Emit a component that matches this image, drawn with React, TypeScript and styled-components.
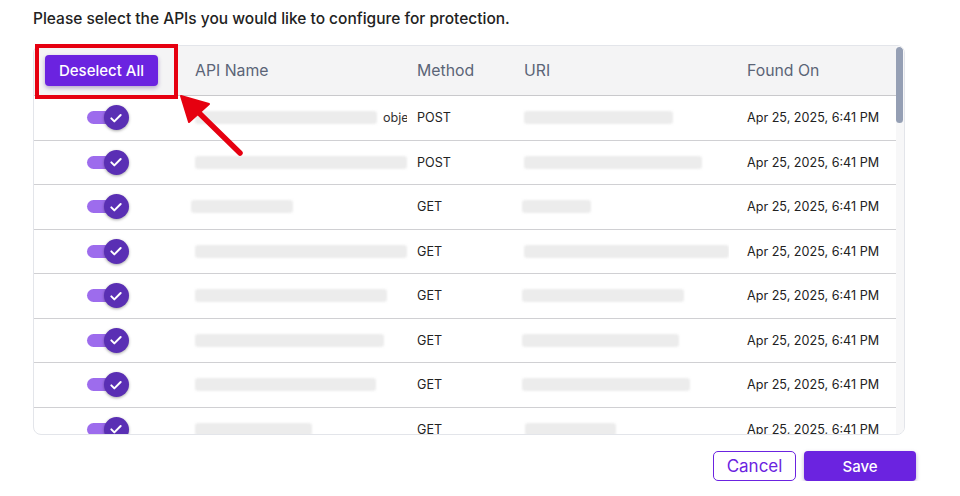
import * as React from 'react'
import styled, { createGlobalStyle } from 'styled-components'

const GlobalStyle = createGlobalStyle`
  html, body {
    margin: 0;
    padding: 0;
    background: #fff;
    font-family: Inter, "Noto Sans", sans-serif;
  }
`

const Page = styled.div`
  position: relative;
  width: 883px;
  padding: 9px 0 0 33px;
`

const Title = styled.div`
  font-size: 15.5px;
  font-weight: 500;
  color: #222;
  line-height: 20px;
  margin-bottom: 16px;
`

const TableCard = styled.div`
  position: relative;
  width: 872px;
  height: 390px;
  border: 1px solid #e3e5ea;
  border-radius: 8px;
  box-sizing: border-box;
  overflow: hidden;
`

const Scroller = styled.div`
  height: 100%;
  margin-right: 8px;
  overflow-y: scroll;
  scrollbar-width: none;

  &::-webkit-scrollbar {
    display: none;
  }
`

const ScrollTrack = styled.div`
  position: absolute;
  top: 0;
  right: 0;
  bottom: 0;
  width: 8px;
  background: #f7f7f8;
`

const ScrollThumb = styled.div`
  margin-top: 1px;
  width: 7px;
  height: 76px;
  border-radius: 4px;
  background: #959fb4;
`

const Grid = styled.div`
  display: grid;
  grid-template-columns: 143px 222px 107px 223px 1fr;
`

const HeadCell = styled.div`
  height: 50px;
  display: flex;
  align-items: center;
  padding-left: 18px;
  background: #f4f4f5;
  border-bottom: 1px solid #c9c9cc;
  color: #5b6477;
  font-size: 15.8px;
  box-sizing: border-box;
  position: sticky;
  top: 0;
  z-index: 1;
`

const CheckHead = styled(HeadCell)`
  padding-left: 11px;
`

const Cell = styled.div`
  height: 44.5px;
  display: flex;
  align-items: center;
  padding-left: 18px;
  border-bottom: 1px solid #d0d0d3;
  box-sizing: border-box;
  color: #222;
  font-size: 12.6px;
  white-space: nowrap;
  overflow: hidden;
`

const NameCell = styled(Cell)`
  overflow: visible;
`

const ToggleCell = styled(Cell)`
  justify-content: center;
  padding-left: 0;
`

const DeselectButton = styled.button`
  width: 113px;
  height: 31px;
  border: none;
  border-radius: 4px;
  background: #6b23e0;
  color: #fff;
  font-family: inherit;
  font-size: 15px;
  font-weight: 500;
  box-shadow: 0 2px 4px rgba(60, 20, 120, 0.35);
  cursor: pointer;
`

const Track = styled.div`
  position: relative;
  width: 30px;
  height: 13px;
  border-radius: 7px;
  background: #9d6ced;
  margin-right: 8px;
`

const Thumb = styled.div`
  position: absolute;
  right: -12px;
  top: -6px;
  width: 25px;
  height: 25px;
  border-radius: 50%;
  background: #5a2fb4;
  box-shadow: 0 1px 3px rgba(0, 0, 0, 0.35);
  display: flex;
  align-items: center;
  justify-content: center;
`

const Blur = styled.span<{ $w: number; $shift?: number }>`
  display: inline-block;
  flex-shrink: 0;
  width: ${p => p.$w}px;
  height: 13px;
  margin-left: ${p => p.$shift || 0}px;
  background: #ececec;
  border-radius: 3px;
  filter: blur(1.2px);
`

const Frag = styled.span`
  flex-shrink: 0;
  margin-left: 6px;
  max-width: 24px;
  overflow: hidden;
  color: #333;
`

const Footer = styled.div`
  display: flex;
  justify-content: flex-end;
  gap: 8px;
  margin-top: 16px;
`

const CancelButton = styled.button`
  width: 83px;
  height: 30px;
  background: #fff;
  border: 1.5px solid #6b23e0;
  border-radius: 5px;
  color: #6b23e0;
  font-family: inherit;
  font-size: 17px;
  cursor: pointer;
`

const SaveButton = styled.button`
  width: 112px;
  height: 30px;
  background: #6b23e0;
  border: none;
  border-radius: 4px;
  color: #fff;
  font-family: inherit;
  font-size: 15px;
  font-weight: 500;
  box-shadow: 0 2px 4px rgba(60, 20, 120, 0.35);
  cursor: pointer;
`

const Highlight = styled.div`
  position: absolute;
  left: 35px;
  top: 44px;
  width: 143px;
  height: 55px;
  border: 4px solid #e60010;
  box-sizing: border-box;
  pointer-events: none;
  z-index: 3;
`

const Arrow = styled.svg`
  position: absolute;
  left: 0;
  top: 0;
  pointer-events: none;
  z-index: 3;
`

type Row = {
  api: number
  apiShift?: number
  frag?: string
  method: string
  uri: number
  uriShift?: number
}

const rows: Row[] = [
  { api: 182, frag: 'obje', method: 'POST', uri: 149 },
  { api: 212, method: 'POST', uri: 178 },
  { api: 102, apiShift: -4, method: 'GET', uri: 69, uriShift: -2 },
  { api: 212, method: 'GET', uri: 205 },
  { api: 192, method: 'GET', uri: 162, uriShift: -2 },
  { api: 189, method: 'GET', uri: 157, uriShift: -2 },
  { api: 181, method: 'GET', uri: 168, uriShift: -2 },
  { api: 117, method: 'GET', uri: 91, uriShift: 1 },
]

// pad the list so the table scrolls like the real one
const allRows: Row[] = Array.from({ length: 44 }, (_, i) => rows[i % rows.length])

const Check = () => (
  <svg width="16" height="16" viewBox="0 0 24 24" fill="none" stroke="#fff" strokeWidth="3" strokeLinecap="round" strokeLinejoin="round">
    <path d="M5 12.5l4.5 4.5L19 7.5" />
  </svg>
)

const Toggle = () => (
  <Track>
    <Thumb>
      <Check />
    </Thumb>
  </Track>
)

const App = () => {
  return (
    <Page>
      <GlobalStyle />
      <Title>Please select the APIs you would like to configure for protection.</Title>

      <TableCard>
        <Scroller>
          <Grid>
            <CheckHead>
              <DeselectButton>Deselect All</DeselectButton>
            </CheckHead>
            <HeadCell>API Name</HeadCell>
            <HeadCell>Method</HeadCell>
            <HeadCell>URI</HeadCell>
            <HeadCell>Found On</HeadCell>

            {allRows.map((r, i) => (
              <React.Fragment key={i}>
                <ToggleCell>
                  <Toggle />
                </ToggleCell>
                <NameCell>
                  <Blur $w={r.api} $shift={r.apiShift} />
                  {r.frag && <Frag>{r.frag}</Frag>}
                </NameCell>
                <Cell>{r.method}</Cell>
                <Cell>
                  <Blur $w={r.uri} $shift={r.uriShift} />
                </Cell>
                <Cell>Apr 25, 2025, 6:41 PM</Cell>
              </React.Fragment>
            ))}
          </Grid>
        </Scroller>
        <ScrollTrack>
          <ScrollThumb />
        </ScrollTrack>
      </TableCard>

      <Footer>
        <CancelButton>Cancel</CancelButton>
        <SaveButton>Save</SaveButton>
      </Footer>

      <Highlight />
      <Arrow width="300" height="200" viewBox="0 0 300 200">
        <line x1="240" y1="153" x2="196" y2="110" stroke="#e60010" strokeWidth="5.5" strokeLinecap="round" />
        <polygon points="181,96 209,104 189,122" fill="#e60010" stroke="#e60010" strokeWidth="2" strokeLinejoin="round" />
      </Arrow>
    </Page>
  )
}

export default App
